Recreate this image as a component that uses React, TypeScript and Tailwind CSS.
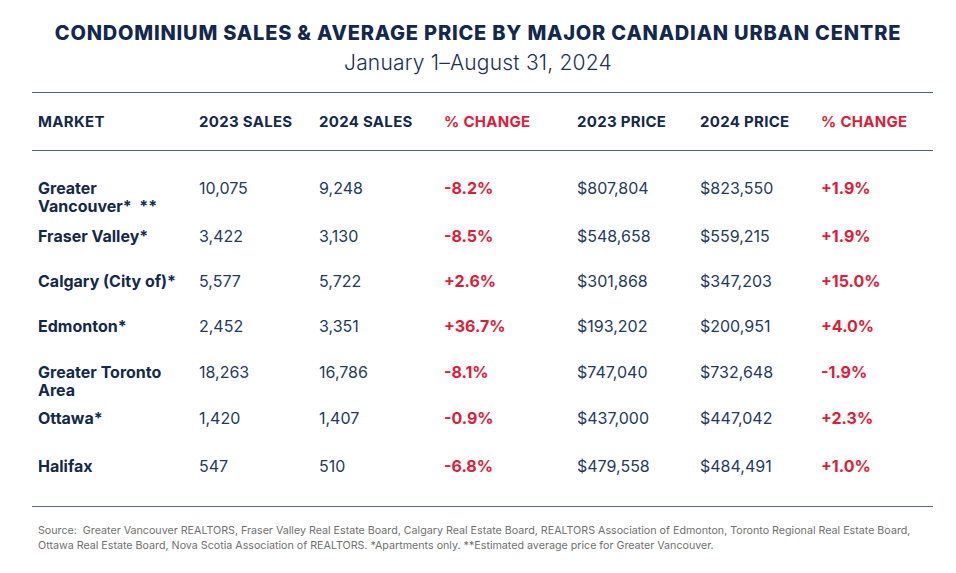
import React from "react";

type Row = {
  market: string[];
  s23: string;
  s24: string;
  sChg: string;
  p23: string;
  p24: string;
  pChg: string;
  h: string;
};

const rows: Row[] = [
  { market: ["Greater", "Vancouver*\u00a0\u00a0**"], s23: "10,075", s24: "9,248", sChg: "-8.2%", p23: "$807,804", p24: "$823,550", pChg: "+1.9%", h: "h-[48px]" },
  { market: ["Fraser Valley*"], s23: "3,422", s24: "3,130", sChg: "-8.5%", p23: "$548,658", p24: "$559,215", pChg: "+1.9%", h: "h-[45px]" },
  { market: ["Calgary (City of)*"], s23: "5,577", s24: "5,722", sChg: "+2.6%", p23: "$301,868", p24: "$347,203", pChg: "+15.0%", h: "h-[45px]" },
  { market: ["Edmonton*"], s23: "2,452", s24: "3,351", sChg: "+36.7%", p23: "$193,202", p24: "$200,951", pChg: "+4.0%", h: "h-[46px]" },
  { market: ["Greater Toronto", "Area"], s23: "18,263", s24: "16,786", sChg: "-8.1%", p23: "$747,040", p24: "$732,648", pChg: "-1.9%", h: "h-[46px]" },
  { market: ["Ottawa*"], s23: "1,420", s24: "1,407", sChg: "-0.9%", p23: "$437,000", p24: "$447,042", pChg: "+2.3%", h: "h-[48px]" },
  { market: ["Halifax"], s23: "547", s24: "510", sChg: "-6.8%", p23: "$479,558", p24: "$484,491", pChg: "+1.0%", h: "h-[49px]" },
];

const grid = "grid grid-cols-[161px_120px_125px_133px_123px_121px_1fr] pl-[6px]";

export default function App() {
  return (
    <div className="w-[956px] h-[573px] bg-white font-['Inter',sans-serif] text-[#13294b]">
      <div className="pt-[19px] text-center">
        <h1 className="text-[20px] leading-[28px] font-extrabold tracking-[0.8px] text-[#12284c]">
          CONDOMINIUM SALES &amp; AVERAGE PRICE BY MAJOR CANADIAN URBAN CENTRE
        </h1>
        <p className="mt-[2px] text-[21px] leading-[28px] font-light tracking-[0.2px] text-[#1c3155]">January 1–August 31, 2024</p>
      </div>

      <div className="ml-[32px] mr-[23px] mt-[15px]">
        <div className={`${grid} h-[59px] items-center border-y-[1.5px] border-[#4f6282] text-[15px] font-bold tracking-[0.3px]`}>
          <span className="pt-[2px]">MARKET</span>
          <span className="pt-[2px]">2023 SALES</span>
          <span className="pt-[2px]">2024 SALES</span>
          <span className="pt-[2px] text-[#e31b37]">% CHANGE</span>
          <span className="pt-[2px]">2023 PRICE</span>
          <span className="pt-[2px]">2024 PRICE</span>
          <span className="pt-[2px] text-[#e31b37]">% CHANGE</span>
        </div>

        <div className="pt-[28px] border-b-[1.5px] border-[#5c6d88]">
          {rows.map((r) => (
            <div key={r.market.join(" ")} className={`${grid} ${r.h} items-start text-[16px] leading-[18px]`}>
              <div className="flex flex-col font-bold text-[#13294b]">
                {r.market.map((m) => (
                  <span key={m}>{m}</span>
                ))}
              </div>
              <span className="text-[#243a5e]">{r.s23}</span>
              <span className="text-[#243a5e]">{r.s24}</span>
              <span className="font-bold text-[#e31b37]">{r.sChg}</span>
              <span className="text-[#243a5e]">{r.p23}</span>
              <span className="text-[#243a5e]">{r.p24}</span>
              <span className="font-bold text-[#e31b37]">{r.pChg}</span>
            </div>
          ))}
        </div>

        <p className="pl-[6px] pt-[16px] text-[10.7px] leading-[15px] text-[#707070] whitespace-nowrap">
          Source:&nbsp; Greater Vancouver REALTORS, Fraser Valley Real Estate Board, Calgary Real Estate Board, REALTORS Association of Edmonton, Toronto Regional Real Estate Board,
          <br />
          Ottawa Real Estate Board, Nova Scotia Association of REALTORS. *Apartments only. **Estimated average price for Greater Vancouver.
        </p>
      </div>
    </div>
  );
}
